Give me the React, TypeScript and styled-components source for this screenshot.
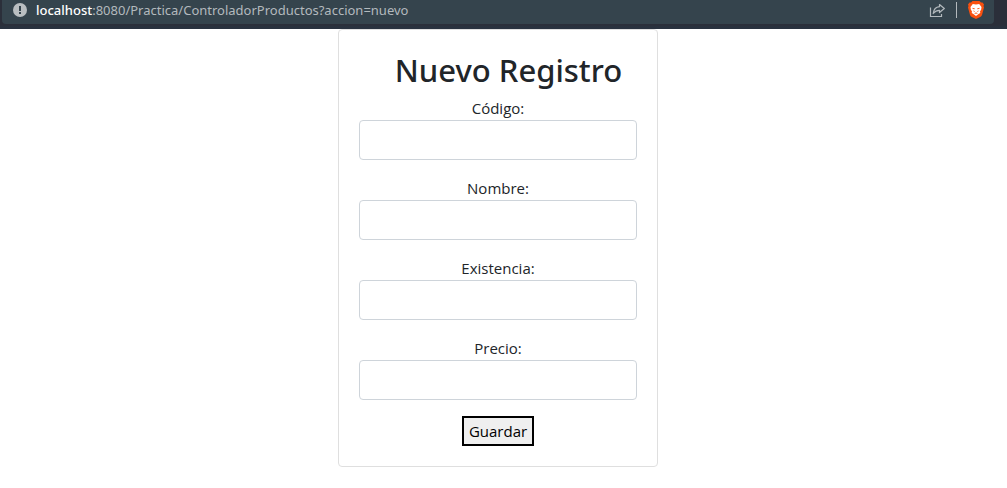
import React from "react";
import styled, { createGlobalStyle } from "styled-components";

const GlobalStyle = createGlobalStyle`
  *, *::before, *::after { box-sizing: border-box; }
  body {
    margin: 0;
    background: #ffffff;
    color: #212529;
    font-family: "Segoe UI", "Open Sans", "Noto Sans", sans-serif;
    font-size: 15px;
    line-height: 24px;
  }
`;

const BrowserBar = styled.header`
  height: 29px;
  padding: 0 13px 5px 2px;
  background: linear-gradient(#2b2f3a 0 25px, #29323f 27px);
`;

const AddressBar = styled.div`
  display: flex;
  align-items: center;
  height: 24px;
  padding: 0 10px 4px 11px;
  border-radius: 0 0 4px 4px;
  background: #35444d;
`;

const Url = styled.div`
  flex: 1;
  min-width: 0;
  margin-left: 9px;
  overflow: hidden;
  white-space: nowrap;
  font-family: "Segoe UI", "Noto Sans", sans-serif;
  font-size: 13px;
  line-height: 20px;
  color: #b3b9bd;
`;

const Host = styled.span`
  color: #ffffff;
  font-weight: 500;
`;

const IconButton = styled.button`
  display: flex;
  flex: none;
  padding: 0;
  border: 0;
  background: none;
  color: #b3b9bd;
`;

const Divider = styled.span`
  width: 1px;
  height: 16px;
  margin: 0 11px;
  background: #b3b9bd;
`;

const Page = styled.main`
  display: flex;
  justify-content: center;
  padding-right: 11px;
`;

const Card = styled.form`
  display: flex;
  flex-direction: column;
  align-items: center;
  gap: 16px;
  width: 100%;
  max-width: 320px;
  padding: 20px;
  border: 1px solid #dfdfdf;
  border-radius: 4px;
  background: #ffffff;
`;

const Title = styled.h2`
  height: 38px;
  margin: 0 0 -8px;
  padding-left: 21px;
  font-family: "Segoe UI", "Noto Sans", sans-serif;
  font-size: 31px;
  font-weight: 500;
  line-height: 40px;
  white-space: nowrap;
`;

const Field = styled.label`
  display: flex;
  flex-direction: column;
  width: 100%;
  text-align: center;
`;

const TextInput = styled.input`
  width: 100%;
  height: 40px;
  padding: 6px 12px;
  border: 1px solid #ced4da;
  border-radius: 4px;
  background: #ffffff;
  color: #495057;
  font: inherit;
`;

const SubmitButton = styled.button`
  height: 30px;
  padding: 0 5px;
  border: 2px solid #000000;
  border-radius: 0;
  background: #efefef;
  color: #000000;
  font: inherit;
`;

const InfoIcon = () => (
  <svg width="14" height="14" viewBox="0 0 14 14" aria-hidden="true">
    <circle cx="7" cy="7" r="7" fill="#b9bec1" />
    <path d="M6 3h2v5H6zM6 9h2v2H6z" fill="#35444d" />
  </svg>
);

const ShareIcon = () => (
  <svg width="16" height="15" viewBox="0 0 16 15" fill="none" stroke="currentColor" strokeWidth="1.2" aria-hidden="true">
    <path d="M1.500 4.500v9h11v-2.500" />
    <path d="M10.500 1.500 15.300 5.500 10.500 9.500V7.300C8 7.300 6 8.200 4.200 10.500 4.700 6.500 7 4 10.500 3.700z" strokeLinejoin="round" />
  </svg>
);

const BraveIcon = () => (
  <svg width="16" height="18" viewBox="0 0 16 18" aria-hidden="true">
    <path
      d="M4.500 0h7l1.500 1.600 1.500-.2L16 3.500l-.5 1.500.5 1.500-2 7.500c-.4 1-1 1.500-1.800 2L8 18l-4.200-2C3 15.500 2.400 15 2 14L0 6.500.5 5 0 3.500l1.500-2.100 1.500.2z"
      fill="#f9500f"
    />
    <path
      d="M4.800 3 8 3.500 11.200 3l2.300 3-.3 2.500-1.200 2 .3 1.500-1.700 1L8 15l-2.600-2-1.700-1 .3-1.500-1.200-2L2.500 6z"
      fill="#ffffff"
    />
    <path
      d="M4 6.800 6.900 7.400 6.600 8.300 5 7.900zM12 6.800 9.100 7.400 9.400 8.300 11 7.900zM5.300 9.300 6.900 10.500 6 11zM10.700 9.300 9.100 10.500 10 11zM6 12.200l2-.7 2 .7-2 .6z"
      fill="#f9500f"
    />
  </svg>
);

const fields = [
  { name: "codigo", label: "Código:" },
  { name: "nombre", label: "Nombre:" },
  { name: "existencia", label: "Existencia:" },
  { name: "precio", label: "Precio:" },
];

export default function App() {
  return (
    <>
      <GlobalStyle />
      <BrowserBar>
        <AddressBar>
          <IconButton type="button" aria-label="Información del sitio">
            <InfoIcon />
          </IconButton>
          <Url>
            <Host>localhost</Host>:8080/Practica/ControladorProductos?accion=nuevo
          </Url>
          <IconButton type="button" aria-label="Compartir">
            <ShareIcon />
          </IconButton>
          <Divider />
          <IconButton type="button" aria-label="Brave Shields">
            <BraveIcon />
          </IconButton>
        </AddressBar>
      </BrowserBar>
      <Page>
        <Card onSubmit={(event) => event.preventDefault()}>
          <Title>Nuevo Registro</Title>
          {fields.map((field) => (
            <Field key={field.name}>
              {field.label}
              <TextInput type="text" name={field.name} />
            </Field>
          ))}
          <SubmitButton type="submit">Guardar</SubmitButton>
        </Card>
      </Page>
    </>
  );
}
